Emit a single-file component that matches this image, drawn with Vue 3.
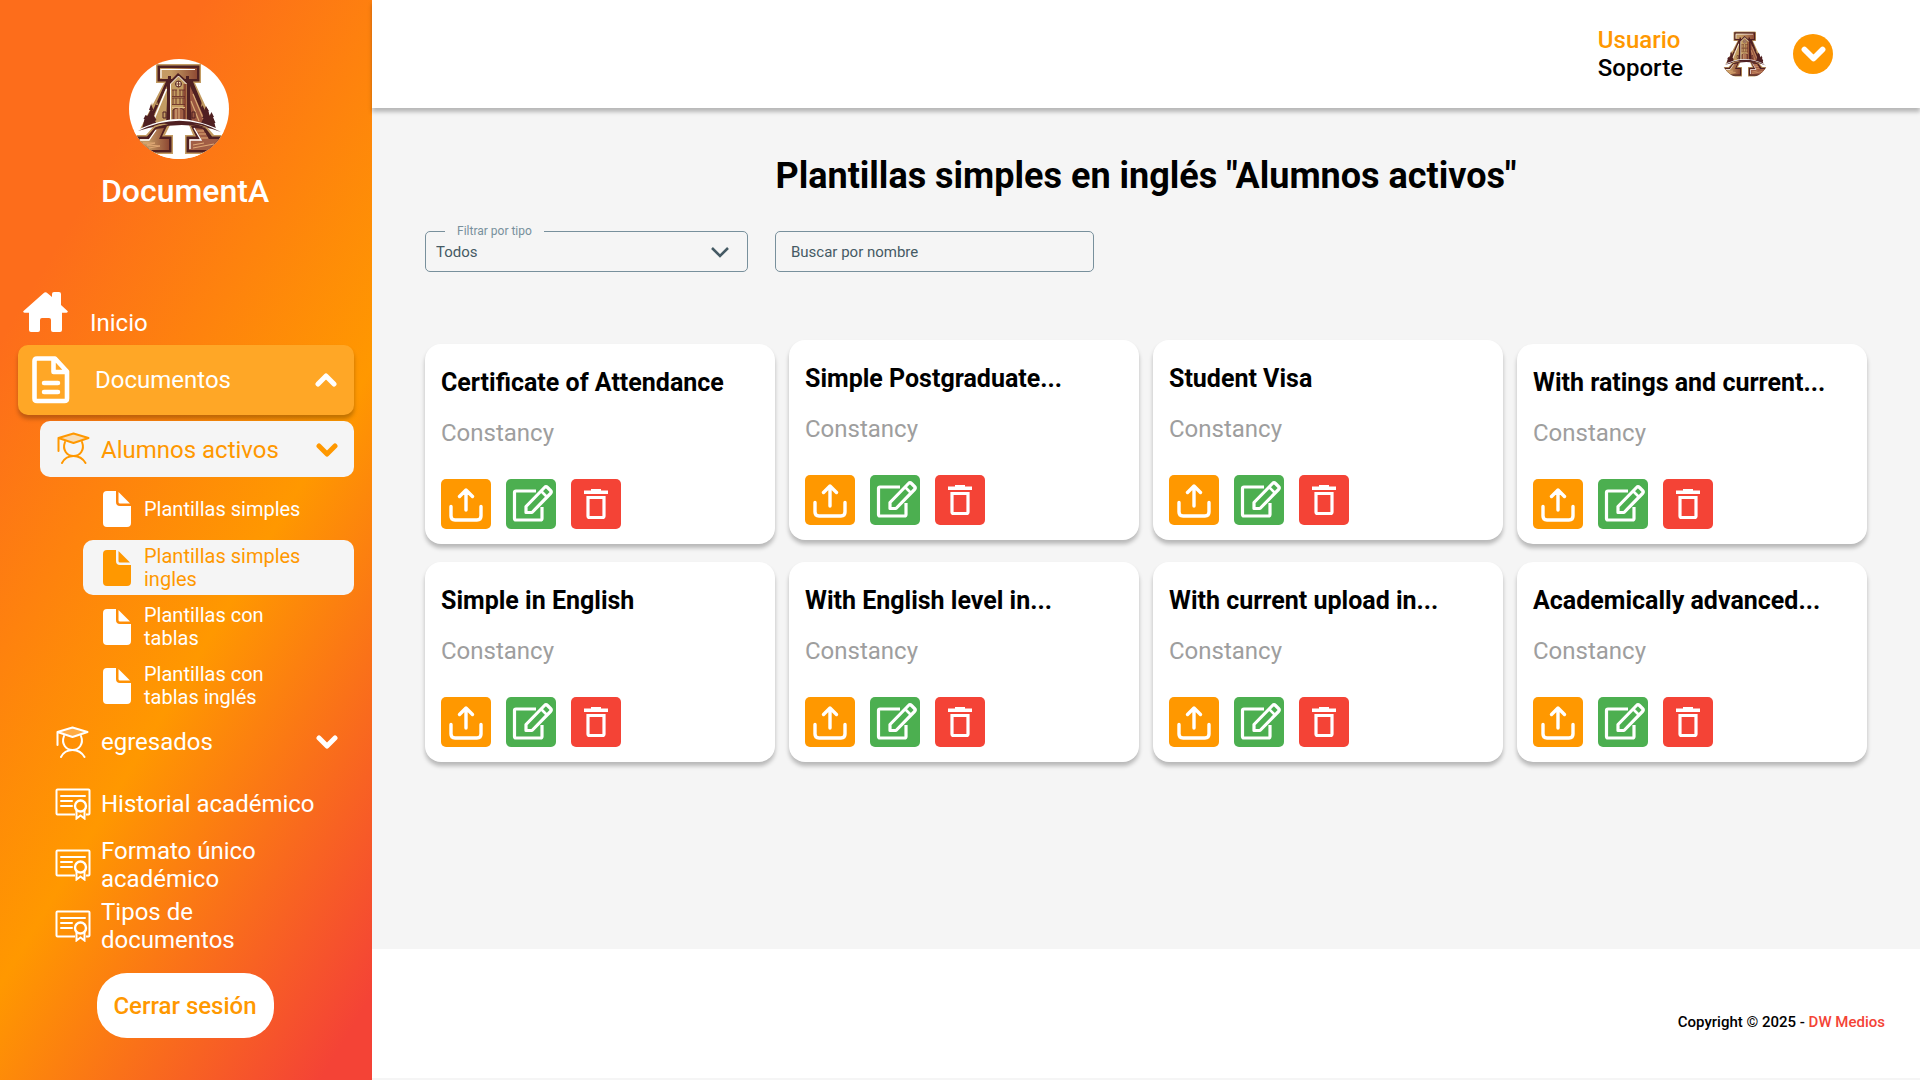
<script setup>
import { ref } from 'vue'

const filterType = ref('Todos')
const search = ref('')

const templates = [
  'Plantillas simples',
  'Plantillas simples ingles',
  'Plantillas con tablas',
  'Plantillas con tablas inglés',
]
const activeTemplate = 'Plantillas simples ingles'

const records = ['Historial académico', 'Formato único académico', 'Tipos de documentos']

const cards = [
  { name: 'Certificate of Attendance', raised: false },
  { name: 'Simple Postgraduate...', raised: true },
  { name: 'Student Visa', raised: true },
  { name: 'With ratings and current...', raised: false },
  { name: 'Simple in English', raised: false },
  { name: 'With English level in...', raised: false },
  { name: 'With current upload in...', raised: false },
  { name: 'Academically advanced...', raised: false },
]
</script>

<template>
  <div class="layout">
    <svg class="sprite" aria-hidden="true">
      <defs>
        <linearGradient id="bronze" x1="0" y1="0" x2="1" y2="0">
          <stop offset="0.3" stop-color="#c49a63" />
          <stop offset="1" stop-color="#8f4a34" />
        </linearGradient>
        <symbol id="logo" viewBox="0 0 100 100">
          <clipPath id="round"><circle cx="50" cy="50" r="50" /></clipPath>
          <g clip-path="url(#round)">
            <rect width="100" height="100" fill="#fff" />
            <path d="M27 5H72V24H66L87 70L63 66H36L10 72L35 24H27Z" fill="#c39c62" />
            <path d="M28.500 6.500H70.500V22.500H64L83 69L50 62L16 69L37 22.500H28.500Z" fill="#4f2022" />
            <path d="M31 9H68V20H31Z" fill="url(#bronze)" />
            <path d="M32 19V10.500H66" fill="none" stroke="#fff" stroke-width="1.200" />
            <path d="M38 27L20 67L38 62Z" fill="#c39c62" />
            <path d="M37.500 30L23 65" stroke="#fff" stroke-width="1.500" />
            <path d="M61 27L79 67L61 62Z" fill="#9a5640" />
            <path d="M64 35L76 64M62 42L70 62" stroke="#d8aa75" stroke-width="1.200" />
            <path d="M22 48L23 43L24 48L23 54ZM27 46L28 42L29 46ZM74 46L73 42L72 48Z" fill="#c39c62" />
            <path
              d="M22 45L20 51L21.500 51L18.500 57L16.500 56L14.500 60L15.500 60L13 70L29 67L26 62L27.500 61L24.500 56L25.500 56L23.500 51L24.500 51Z"
              fill="#4f2022"
            />
            <path
              d="M77 47L74.500 53L76 53L73 59L74.500 59L71 66L87 70L85.500 64L86.500 64L84 58L85 58L82.500 53L80.500 57L79.500 52L80 52Z"
              fill="#4f2022"
            />
            <path d="M39 17H42V21L49 14L57 21V17H60V26L63 66H37Z" fill="#4f2022" />
            <path d="M49.500 17L58 25V64H41V25Z" fill="#c39c62" />
            <path d="M56 25V62" stroke="#8f4a34" stroke-width="3" />
            <path d="M41.500 62V25L49.500 17L57.500 25" fill="none" stroke="#fff" stroke-width="0.900" />
            <circle cx="49.500" cy="25" r="3" fill="#f6dfba" stroke="#4f2022" stroke-width="1" />
            <path
              d="M49.500 22V28M46.500 25H52.500M44 31V37M47 31V37M51 31V37M54 31V37M44 39V45M47 39V45M51 39V45M54 39V45M43 37.500H56M43 45.500H56M43 31H48M50 31H56M43 39H56"
              fill="none"
              stroke="#6b3028"
              stroke-width="0.900"
            />
            <path d="M44 61V51Q49.500 46 55 51V61Z" fill="#a05f45" stroke="#4f2022" stroke-width="1" />
            <path d="M47 50V60M50 49V60M43 48.500H56" stroke="#dfba84" stroke-width="1" />
            <path d="M34 53H37V59H34ZM63 53H66V59H63Z" fill="none" stroke="#4f2022" stroke-width="1" />
            <path d="M-2 76C15 67 35 59 52 60C69 61 86 68 102 76V100H-2Z" fill="#fff" />
            <path d="M9 72Q52 51 92 73Q52 58 9 72Z" fill="#4f2022" />
            <path
              d="M3 76H17L25 67Q35 63 41 66L36 76H44V95H10ZM97 76H85L78 68Q68 64 60 66L64 76H56V95H90Z"
              fill="#c39c62"
            />
            <path
              d="M5 77.500H18L26 68.500Q33 65.500 38 67L33 77.500H42.500V93.500H13ZM95 77.500H83L77 69.500Q68 65.500 62 67L67 77.500H57.500V93.500H88Z"
              fill="#4f2022"
            />
            <path d="M9 80H20L27 70L35 69L30 80H40V91H16Z" fill="url(#bronze)" />
            <path d="M91 80H80L74 70L65 69L71 80H60V91H85Z" fill="#a15e45" />
            <path d="M61 90V81H72L65 69M11 81H20L27 71" fill="none" stroke="#fff" stroke-width="1.300" />
            <path d="M68 72L75 72M70 75L77 75M72 79L79 79M64 89L85 85M64 86L75 84" stroke="#dfa875" stroke-width="1.200" />
            <path d="M14 84L26 84L18 86L31 87L20 89" fill="none" stroke="#dfa875" stroke-width="1" />
            <path d="M27 69Q52 58 78 69Q53 63 27 69Z" fill="#4f2022" />
          </g>
        </symbol>
        <symbol id="chevron" viewBox="0 0 22 14">
          <path d="M3 3L11 11L19 3" fill="none" stroke="currentColor" stroke-width="5" stroke-linecap="round" stroke-linejoin="round" />
        </symbol>
        <symbol id="graduate" viewBox="0 0 33 32">
          <path d="M1.500 6.500L16 10.500L31.500 6L16.500 1.500Z" fill="currentColor" fill-opacity="0.250" />
          <g fill="none" stroke="currentColor" stroke-width="2" stroke-linecap="round" stroke-linejoin="round">
            <path d="M1.500 19V6L16.500 1.500L31.500 6L16.500 11L1.500 6" />
            <path d="M8 10C5 18 10 24 16.500 24S28 18 25 10" />
            <path d="M5 31C8 25 12 24 16.500 24S25 25 28.500 31" />
          </g>
        </symbol>
        <symbol id="diploma" viewBox="0 0 36 32">
          <g fill="none" stroke="currentColor" stroke-width="2">
            <path d="M20 26.500H2.500Q1.500 26.500 1.500 25.500V2.500Q1.500 1.500 2.500 1.500H33.500Q34.500 1.500 34.500 2.500V25.500Q34.500 26.500 33.500 26.500H31" />
            <path d="M6 8H30M6 13H17M6 18H17" stroke-linecap="round" />
            <circle cx="25.500" cy="18" r="5.500" stroke-width="2.400" />
            <path d="M21.500 22V30.500L25.500 27.500L29.500 30.500V22" />
          </g>
        </symbol>
        <symbol id="sheet" viewBox="0 0 28 36">
          <path d="M4 0H13V11Q13 15 17 15H28V32Q28 36 24 36H4Q0 36 0 32V4Q0 0 4 0Z" fill="currentColor" />
          <path d="M15.500 1L27 12.500H17Q15.500 12.500 15.500 11Z" fill="currentColor" />
        </symbol>
      </defs>
    </svg>

    <aside class="sidebar">
      <div class="brand">
        <svg class="brand-logo" role="img" aria-label="Logo"><use href="#logo" /></svg>
        <span class="brand-name">DocumentA</span>
      </div>

      <nav class="menu">
        <a class="home" href="#">
          <svg width="45" height="40" viewBox="0 0 45 40" aria-hidden="true">
            <path
              d="M20.500 1.200Q22.500 -0.500 24.500 1.200L29 5V2Q29 0 31 0H36Q38 0 38 2V13L44.500 19Q45.500 20.500 43.500 20.700H39V38Q39 40 37 40H30Q28 40 28 38V28Q28 26 26 26H19Q17 26 17 28V38Q17 40 15 40H8Q6 40 6 38V20.700H1.500Q-0.500 20.500 0.500 19Z"
              fill="#fff"
            />
          </svg>
          <span>Inicio</span>
        </a>

        <button class="documents" type="button" aria-expanded="true">
          <svg width="38" height="48" viewBox="0 0 38 48" aria-hidden="true">
            <path
              d="M21.500 2.500H5Q2.500 2.500 2.500 5V42.500Q2.500 45 5 45H32.500Q35 45 35 42.500V15.500L23 2.500H21.500V16H35"
              fill="none"
              stroke="#fff"
              stroke-width="4.600"
              stroke-linejoin="round"
            />
            <path d="M12 27H26M12 36H26" stroke="#fff" stroke-width="4.500" stroke-linecap="round" />
          </svg>
          <span class="label">Documentos</span>
          <svg class="arrow up" aria-hidden="true"><use href="#chevron" /></svg>
        </button>

        <button class="group open" type="button" aria-expanded="true">
          <svg class="graduate" aria-hidden="true"><use href="#graduate" /></svg>
          <span class="label">Alumnos activos</span>
          <svg class="arrow" aria-hidden="true"><use href="#chevron" /></svg>
        </button>

        <div class="submenu">
          <a v-for="item in templates" :key="item" href="#" class="subitem" :class="{ active: item === activeTemplate }">
            <svg class="sheet" aria-hidden="true"><use href="#sheet" /></svg>
            <span>{{ item }}</span>
          </a>
        </div>

        <div class="records">
          <button class="group" type="button" aria-expanded="false">
            <svg class="graduate" aria-hidden="true"><use href="#graduate" /></svg>
            <span class="label">egresados</span>
            <svg class="arrow" aria-hidden="true"><use href="#chevron" /></svg>
          </button>
          <a v-for="item in records" :key="item" class="record" href="#">
            <svg class="diploma" aria-hidden="true"><use href="#diploma" /></svg>
            <span>{{ item }}</span>
          </a>
        </div>
      </nav>

      <button class="logout" type="button">Cerrar sesión</button>
    </aside>

    <div class="page">
      <header class="topbar">
        <div class="user">
          <span class="user-role">Usuario</span>
          <span>Soporte</span>
        </div>
        <svg class="avatar" role="img" aria-label="Avatar"><use href="#logo" /></svg>
        <button class="user-menu" type="button" aria-label="Abrir menú de usuario">
          <svg width="25" height="16" aria-hidden="true"><use href="#chevron" /></svg>
        </button>
      </header>

      <main class="content">
        <h1>Plantillas simples en inglés "Alumnos activos"</h1>

        <div class="filters">
          <div class="select-field">
            <label for="type">Filtrar por tipo</label>
            <select id="type" v-model="filterType">
              <option>Todos</option>
              <option>Constancy</option>
            </select>
            <svg width="20" height="12" viewBox="0 0 20 12" aria-hidden="true">
              <path d="M2 2L10 10L18 2" fill="none" stroke="#455a64" stroke-width="2.500" />
            </svg>
          </div>
          <input v-model="search" class="search" type="text" placeholder="Buscar por nombre" aria-label="Buscar por nombre" />
        </div>

        <section class="cards">
          <article v-for="card in cards" :key="card.name" class="card" :class="{ raised: card.raised }">
            <h2>{{ card.name }}</h2>
            <p>Constancy</p>
            <div class="actions">
              <button class="action upload" type="button" aria-label="Subir">
                <svg viewBox="0 0 50 50" aria-hidden="true">
                  <path
                    d="M25 31V11.500M18.500 17.500L25 11L31.500 17.500M10 27.500V37Q10 41 14 41H36Q40 41 40 37V27.500"
                    fill="none"
                    stroke="#fff"
                    stroke-width="3.400"
                    stroke-linecap="round"
                    stroke-linejoin="round"
                  />
                </svg>
              </button>
              <button class="action edit" type="button" aria-label="Editar">
                <svg viewBox="0 0 50 50" aria-hidden="true">
                  <g fill="none" stroke="#fff" stroke-width="3.200" stroke-linejoin="round">
                    <path d="M30 12H10Q8.500 12 8.500 13.500V39.500Q8.500 41 10 41H34.500Q36 41 36 39.500V28" />
                    <path d="M20 33.500V27.500L38.500 8.500Q40 7 41.500 8.500L44.500 11.500Q46 13 44.500 14.500L26 33.500Z" />
                    <path d="M35 12L41.500 18.500" stroke-width="2.600" />
                  </g>
                </svg>
              </button>
              <button class="action remove" type="button" aria-label="Eliminar">
                <svg viewBox="0 0 50 50" aria-hidden="true">
                  <path d="M20 10H30V11.500H37V15H13V11.500H20Z" fill="#fff" />
                  <path d="M17 18.500H33V37Q33 38.500 31.500 38.500H18.500Q17 38.500 17 37Z" fill="none" stroke="#fff" stroke-width="3.200" />
                </svg>
              </button>
            </div>
          </article>
        </section>
      </main>

      <footer class="footer">
        <span>Copyright © 2025 - <a href="#">DW Medios</a></span>
      </footer>
    </div>
  </div>
</template>

<style>
body {
  margin: 0;
  background: #f5f5f5;
}
</style>

<style scoped>
* {
  box-sizing: border-box;
}

.layout {
  display: flex;
  min-height: 100vh;
  font-family: Roboto, 'Liberation Sans', sans-serif;
  font-size: 24px;
  line-height: 28px;
  color: #000;
}

.sprite {
  position: absolute;
  width: 0;
  height: 0;
}

svg {
  display: block;
  flex: none;
}

a {
  color: inherit;
  text-decoration: none;
}

button {
  border: 0;
  padding: 0;
  background: none;
  color: inherit;
  font: inherit;
  text-align: left;
  cursor: pointer;
}

.sidebar {
  flex: 0 0 372px;
  display: flex;
  flex-direction: column;
  align-items: center;
  padding: 59px 18px 40px;
  color: #fff;
  background: linear-gradient(121deg, #fd6d1b 20%, #ff9800 58%, #f44336 95%);
}

.brand {
  display: flex;
  flex-direction: column;
  align-items: center;
  gap: 12px;
  margin-right: 2px;
}

.brand-logo {
  width: 100px;
  height: 100px;
  margin-right: 12px;
}

.brand-name {
  font-size: 32px;
  line-height: 40px;
  font-weight: 500;
}

.menu {
  align-self: stretch;
  margin-top: 80px;
}

.home {
  display: flex;
  align-items: flex-end;
  gap: 22px;
  padding: 1px 5px 8px;
}

.home svg {
  margin-bottom: 5px;
}

.documents {
  display: flex;
  align-items: center;
  width: 100%;
  height: 70px;
  padding: 0 17px 0 14px;
  border-radius: 10px;
  background: #ffa726;
  box-shadow: 0 4px 4px rgba(0, 0, 0, 0.25);
}

.documents .label {
  margin-left: 25px;
}

.arrow {
  width: 22px;
  height: 14px;
  margin-left: auto;
}

.up {
  transform: rotate(180deg);
}

.group {
  display: flex;
  align-items: center;
  width: 314px;
  height: 56px;
  margin-left: 22px;
  padding: 2px 16px 0;
  border-radius: 10px;
}

.group.open {
  margin-top: 6px;
  background: #f5f5f5;
  color: #ff9800;
}

.graduate {
  width: 33px;
  height: 32px;
  margin-right: 12px;
}

.group.open .graduate {
  margin: 0 11px 4px 1px;
}

.submenu {
  display: flex;
  flex-direction: column;
  gap: 4px;
  margin: 4px 0 0 65px;
}

.subitem {
  display: flex;
  align-items: center;
  gap: 13px;
  height: 55px;
  padding: 1px 40px 0 20px;
  border-radius: 10px;
  font-size: 20px;
  line-height: 23px;
}

.subitem.active {
  background: #f5f5f5;
  color: #ff9800;
}

.sheet {
  width: 28px;
  height: 36px;
}

.records {
  display: flex;
  flex-direction: column;
  gap: 5px;
}

.record {
  display: flex;
  align-items: center;
  gap: 10px;
  height: 56px;
  padding: 3px 32px 0 37px;
}

.diploma {
  width: 36px;
  height: 32px;
}

.logout {
  width: 177px;
  height: 65px;
  margin: 21px 2px 0 0;
  border-radius: 30px;
  background: #fff;
  color: #ff9800;
  font-weight: 500;
  text-align: center;
}

.page {
  flex: 1;
  min-width: 0;
  display: flex;
  flex-direction: column;
  background: #f5f5f5;
}

.topbar {
  display: flex;
  align-items: center;
  justify-content: flex-end;
  height: 108px;
  padding-right: 87px;
  background: #fff;
  box-shadow: 0 4px 4px rgba(0, 0, 0, 0.25);
}

.user {
  display: flex;
  flex-direction: column;
  font-weight: 500;
}

.user-role {
  color: #ff9800;
}

.avatar {
  width: 50px;
  height: 50px;
  margin: 0 23px 0 37px;
}

.user-menu {
  display: flex;
  align-items: center;
  justify-content: center;
  width: 40px;
  height: 40px;
  border-radius: 50%;
  background: #ff9800;
  color: #fff;
}

.content {
  flex: 1;
  padding: 47px 53px 40px;
}

h1 {
  margin: 0;
  font-size: 36px;
  line-height: 42px;
  font-weight: 700;
  text-align: center;
}

.filters {
  display: flex;
  gap: 27px;
  margin-top: 34px;
}

.select-field {
  position: relative;
  width: 323px;
}

.select-field label {
  position: absolute;
  top: -7px;
  left: 20px;
  padding: 0 12px;
  background: #f5f5f5;
  color: #78909c;
  font-size: 12px;
  line-height: 14px;
}

.select-field svg {
  position: absolute;
  top: 15px;
  right: 18px;
  pointer-events: none;
}

select,
.search {
  height: 41px;
  border: 1px solid #78909c;
  border-radius: 5px;
  background: transparent;
  color: #455a64;
  font-family: inherit;
  font-size: 15px;
}

select {
  appearance: none;
  width: 100%;
  padding: 0 40px 0 10px;
}

.search {
  width: 319px;
  padding: 0 15px;
}

.search::placeholder {
  color: #455a64;
  opacity: 1;
}

.cards {
  display: grid;
  grid-template-columns: repeat(4, 1fr);
  gap: 18px 14px;
  margin-top: 72px;
}

.card {
  height: 200px;
  padding: 25px 16px 15px;
  border-radius: 16px;
  background: #fff;
  box-shadow: 0 4px 4px rgba(0, 0, 0, 0.25);
}

.card.raised {
  transform: translateY(-4px);
}

.card h2 {
  margin: 0;
  font-size: 25px;
  line-height: 28px;
  font-weight: 700;
  white-space: nowrap;
}

.card p {
  margin: 22px 0 32px;
  color: #9e9e9e;
}

.actions {
  display: flex;
  gap: 15px;
}

.action {
  width: 50px;
  height: 50px;
  border-radius: 5px;
}

.upload {
  background: #ff9800;
}

.edit {
  background: #4caf50;
}

.remove {
  background: #f44336;
}

.footer {
  display: flex;
  align-items: center;
  justify-content: flex-end;
  height: 129px;
  margin-bottom: 2px;
  padding: 16px 35px 0 0;
  background: #fff;
  font-size: 15px;
  line-height: 18px;
  font-weight: 500;
}

.footer a {
  color: #f44336;
}
</style>
